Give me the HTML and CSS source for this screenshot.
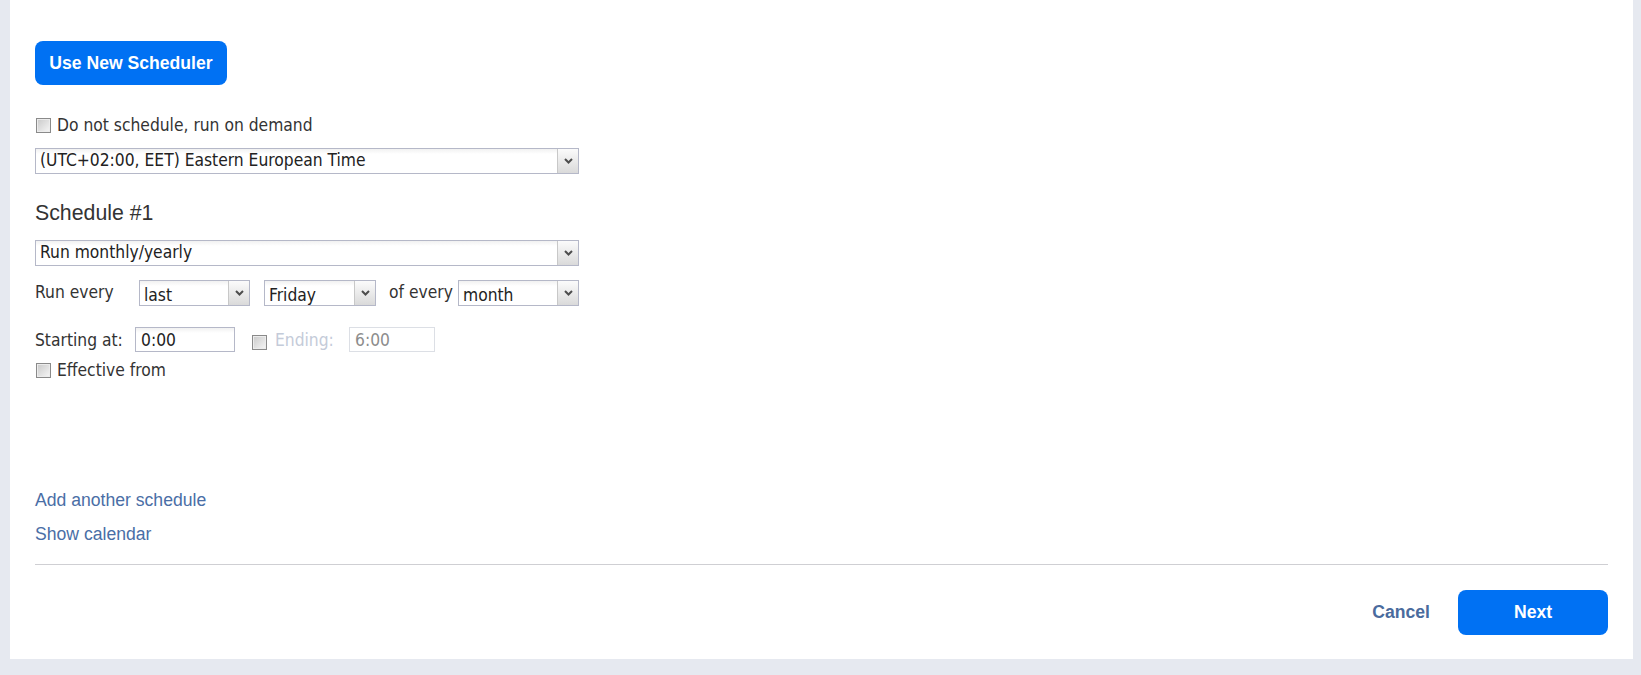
FILE: index.html
```html
<!DOCTYPE html>
<html lang="en">
<head>
    <meta charset="UTF-8">
    <meta name="viewport" content="width=device-width, initial-scale=1.0">
    <title>Schedule</title>
    <link rel="stylesheet" href="styles.css">
</head>
<body>
    <div class="panel">
        <button class="btn-primary btn-scheduler" type="button">Use New Scheduler</button>

        <div class="check-row on-demand">
            <span class="checkbox"></span>
            <span class="label">Do not schedule, run on demand</span>
        </div>

        <div class="combo combo-wide timezone">
            <span class="combo-text">(UTC+02:00, EET) Eastern European Time</span>
            <span class="combo-trigger"><svg width="9" height="6" viewBox="0 0 9 6"><polyline points="1,1 4.5,4.5 8,1" fill="none" stroke="#4d4d4d" stroke-width="2"/></svg></span>
        </div>

        <h2 class="schedule-title">Schedule #1</h2>

        <div class="combo combo-wide frequency">
            <span class="combo-text">Run monthly/yearly</span>
            <span class="combo-trigger"><svg width="9" height="6" viewBox="0 0 9 6"><polyline points="1,1 4.5,4.5 8,1" fill="none" stroke="#4d4d4d" stroke-width="2"/></svg></span>
        </div>

        <div class="run-row">
            <span class="label run-label">Run every</span>
            <div class="combo combo-small combo-last">
                <span class="combo-text">last</span>
                <span class="combo-trigger"><svg width="9" height="6" viewBox="0 0 9 6"><polyline points="1,1 4.5,4.5 8,1" fill="none" stroke="#4d4d4d" stroke-width="2"/></svg></span>
            </div>
            <div class="combo combo-small combo-day">
                <span class="combo-text">Friday</span>
                <span class="combo-trigger"><svg width="9" height="6" viewBox="0 0 9 6"><polyline points="1,1 4.5,4.5 8,1" fill="none" stroke="#4d4d4d" stroke-width="2"/></svg></span>
            </div>
            <span class="label of-label">of every</span>
            <div class="combo combo-small combo-period">
                <span class="combo-text">month</span>
                <span class="combo-trigger"><svg width="9" height="6" viewBox="0 0 9 6"><polyline points="1,1 4.5,4.5 8,1" fill="none" stroke="#4d4d4d" stroke-width="2"/></svg></span>
            </div>
        </div>

        <div class="time-row">
            <span class="label start-label">Starting at:</span>
            <input class="time-input start-input" type="text" value="0:00">
            <span class="checkbox end-check"></span>
            <span class="label end-label">Ending:</span>
            <input class="time-input end-input" type="text" value="6:00" disabled>
        </div>

        <div class="check-row effective">
            <span class="checkbox"></span>
            <span class="label">Effective from</span>
        </div>

        <div class="links">
            <a class="link" href="#">Add another schedule</a>
            <a class="link" href="#">Show calendar</a>
        </div>

        <div class="divider"></div>

        <div class="footer">
            <a class="cancel" href="#">Cancel</a>
            <button class="btn-primary btn-next" type="button">Next</button>
        </div>
    </div>
</body>
</html>
```

FILE: styles.css
```css
:root {
    --page-bg: #e6e9f0;
    --blue: #0071f3;
    --text: #333;
    --link: #4a6ea6;
    --field-border: #b5b8c8;
}

* {
    margin: 0;
    padding: 0;
    box-sizing: border-box;
}

body {
    background-color: var(--page-bg);
    padding: 0 8px 16px 10px;
    font-family: 'DejaVu Sans Condensed', 'Liberation Sans', sans-serif;
    font-size: 17.3px;
    color: var(--text);
}

.panel {
    background-color: #fff;
    padding: 41px 25px 24px 25px;
}

.btn-primary {
    display: flex;
    align-items: center;
    justify-content: center;
    border: none;
    border-radius: 8px;
    background-color: var(--blue);
    color: #fff;
    font-family: 'Liberation Sans', Arial, sans-serif;
    font-weight: bold;
    font-size: 17.6px;
    cursor: pointer;
}

.btn-scheduler {
    width: 192px;
    height: 44px;
}

.label {
    line-height: 20px;
    white-space: nowrap;
}

.check-row {
    display: flex;
    align-items: center;
    height: 20px;
}

.on-demand {
    margin-top: 30px;
}

.effective {
    margin-top: 8px;
}

.checkbox {
    width: 15px;
    height: 15px;
    margin-left: 1px;
    margin-right: 6px;
    border: 1px solid #8a8a8a;
    background: linear-gradient(135deg, #c9c9c9, #f6f6f6);
    box-shadow: inset 0 0 0 1px #ececec;
    flex-shrink: 0;
}

/* combo boxes */
.combo {
    display: flex;
    height: 26px;
    border: 1px solid var(--field-border);
    background: linear-gradient(#f1f1f1, #fff 5px);
}

.combo-text {
    flex: 1;
    padding-left: 4px;
    line-height: 20px;
    color: #222;
    white-space: nowrap;
    overflow: hidden;
}

.combo-wide {
    width: 544px;
}

.combo-wide .combo-text {
    padding-top: 1px;
}

.combo-small .combo-text {
    padding-top: 4px;
}

.combo-trigger {
    width: 21px;
    display: flex;
    align-items: center;
    justify-content: center;
    border-left: 1px solid #c8c8c8;
    background: linear-gradient(#fbfbfb, #dadada);
}

.timezone {
    margin-top: 13px;
}

.schedule-title {
    margin-top: 27px;
    font-family: 'Liberation Sans', Arial, sans-serif;
    font-weight: normal;
    font-size: 21.3px;
    line-height: 24px;
    height: 24px;
    color: #333;
}

.frequency {
    margin-top: 15px;
}

.run-row {
    display: flex;
    margin-top: 14px;
    height: 26px;
}

.run-row .label {
    padding-top: 2px;
}

.run-label {
    width: 104px;
}

.combo-last {
    width: 111px;
}

.combo-day {
    width: 112px;
    margin-left: 14px;
}

.of-label {
    width: 69px;
    margin-left: 13px;
}

.combo-period {
    width: 121px;
}

.time-row {
    display: flex;
    margin-top: 21px;
    height: 25px;
}

.time-row .label {
    padding-top: 3px;
}

.start-label {
    width: 100px;
}

.time-input {
    height: 25px;
    border: 1px solid var(--field-border);
    background: linear-gradient(#f1f1f1, #fff 5px);
    padding: 1px 0 0 5px;
    font-family: inherit;
    font-size: 17.3px;
    line-height: 20px;
    color: #222;
    outline: none;
}

.start-input {
    width: 100px;
}

.end-check {
    margin: 8px 0 0 17px;
}

.end-label {
    width: 74px;
    margin-left: 8px;
    color: #c4cbd9;
}

.end-input {
    width: 86px;
    border-color: #dcdfe5;
    background: #fff;
    color: #8c8c8c;
}

.links {
    display: flex;
    flex-direction: column;
    align-items: flex-start;
    gap: 14px;
    margin-top: 110px;
}

.link {
    font-family: 'Liberation Sans', Arial, sans-serif;
    font-size: 17.6px;
    line-height: 20px;
    color: var(--link);
    text-decoration: none;
}

.divider {
    margin-top: 20px;
    height: 1px;
    background-color: #cfcfd3;
}

.footer {
    display: flex;
    justify-content: flex-end;
    align-items: center;
    margin-top: 25px;
    height: 45px;
}

.cancel {
    font-family: 'Liberation Sans', Arial, sans-serif;
    font-weight: bold;
    font-size: 17.6px;
    color: #4a6b9d;
    text-decoration: none;
    margin-right: 28px;
}

.btn-next {
    width: 150px;
    height: 45px;
}
```
